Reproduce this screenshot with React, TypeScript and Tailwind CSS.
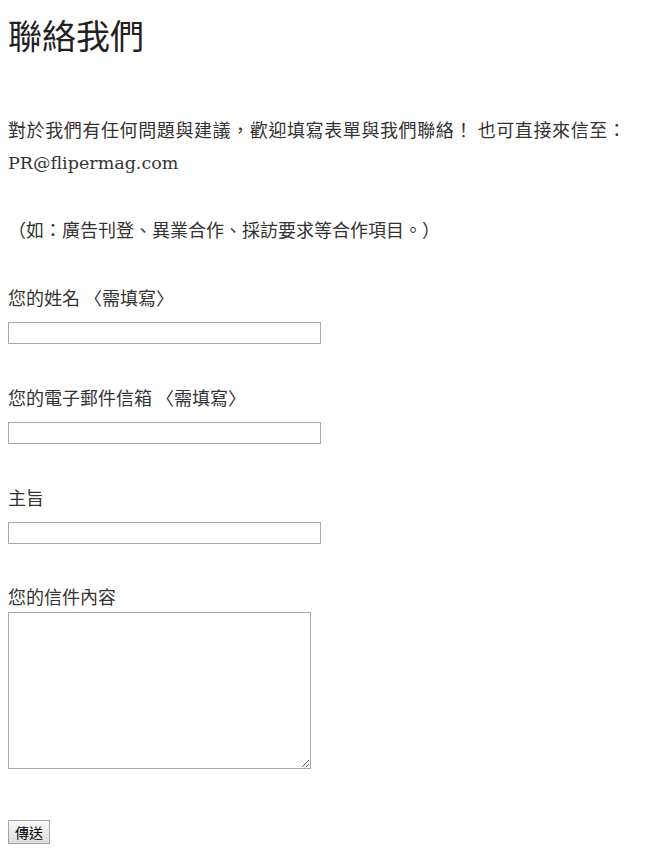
const font = "font-['DejaVu_Serif','Noto_Sans_CJK_TC',serif]"

const Field = ({ label, required }: { label: string; required?: boolean }) => (
  <div className="mt-[37px]">
    <p className="leading-[32px]">
      {label}
      {required && <span> 〈需填寫〉</span>}
    </p>
    <input type="text" className="mt-[9px] block h-[22px] w-[313px] border border-[#a9a9a9] bg-white px-1 outline-none" />
  </div>
)

export default function App() {
  return (
    <div className={`min-h-[858px] bg-white px-2 text-[18px] text-[#333] ${font}`}>
      <h1 className="pt-[15px] text-[34px] leading-[40px] font-normal text-[#222] font-['Noto_Sans_CJK_TC',sans-serif]">
        聯絡我們
      </h1>
      <p className="mt-[58px] leading-[32px]">
        <span className="tracking-[0.6px] font-['Noto_Sans_CJK_TC',sans-serif]">對於我們有任何問題與建議，歡迎填寫表單與我們聯絡！ 也可直接來信至：</span>{' '}
        <span className="text-[17.5px]">PR@flipermag.com</span>
      </p>
      <p className="mt-[34px] leading-[32px] font-['Noto_Sans_CJK_TC',sans-serif]">
        （如：廣告刊登、異業合作、採訪要求等合作項目。）
      </p>
      <div className="font-['Noto_Sans_CJK_TC',sans-serif]">
        <div className="mt-[36px]">
          <p className="leading-[32px]">您的姓名 〈需填寫〉</p>
          <input type="text" className="mt-[9px] block h-[22px] w-[313px] border border-[#a9a9a9] bg-white px-1 outline-none" />
        </div>
        <Field label="您的電子郵件信箱" required />
        <Field label="主旨" />
        <div className="mt-[36px]">
          <p className="leading-[32px]">您的信件內容</p>
          <textarea className="block h-[157px] w-[303px] resize border border-[#a9a9a9] bg-white p-1 outline-none" />
        </div>
        <button
          type="button"
          className="mt-[51px] mb-3 h-6 w-[42px] border border-[#a3a3a3] bg-gradient-to-b from-[#f7f7f7] to-[#dedede] text-[14px] leading-none text-black"
        >
          傳送
        </button>
      </div>
    </div>
  )
}
